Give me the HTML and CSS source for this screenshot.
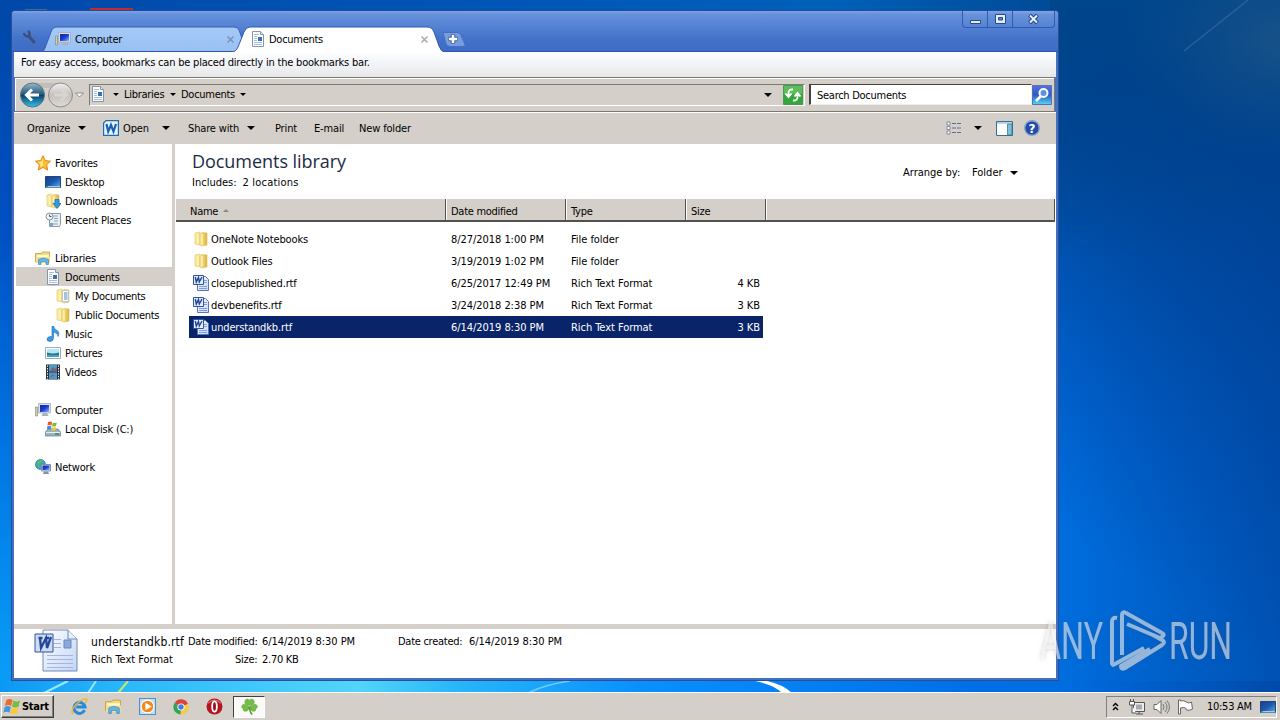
FILE: index.html
```
<!DOCTYPE html>
<html lang="en">
<head>
<meta charset="utf-8">
<title>Documents</title>
<link rel="stylesheet" href="styles.css">
</head>
<body>
<svg class="defs" width="0" height="0">
  <defs>
    <linearGradient id="gold" x1="0" x2="1"><stop offset="0" stop-color="#fdf0a0"/><stop offset="1" stop-color="#dfb03a"/></linearGradient>
    <linearGradient id="screen" x1="0" x2="1" y1="0" y2="1"><stop offset="0" stop-color="#0a2a9c"/><stop offset=".5" stop-color="#1c3cd0"/><stop offset="1" stop-color="#8fb8ff"/></linearGradient>
    <linearGradient id="paper" x1="0" x2="1" y1="0" y2="1"><stop offset="0" stop-color="#fff"/><stop offset="1" stop-color="#c3d4f5"/></linearGradient>
    <linearGradient id="desk" x1="0" x2="1" y1="0" y2="1"><stop offset="0" stop-color="#1a3f86"/><stop offset=".5" stop-color="#1b59b0"/><stop offset="1" stop-color="#58b2e8"/></linearGradient>
  </defs>
  <symbol id="folder" viewBox="0 0 16 16"><path d="M2 2l5-1v13l-5-1z" fill="#f9e998" stroke="#e3c76c" stroke-width=".6"/><path d="M7 3l2-1.500 5 .5v12l-5 1-2-1z" fill="url(#gold)" stroke="#dab85a" stroke-width=".6"/><path d="M9 3.500v10M5 4v8" stroke="#fff8c8"/></symbol>
  <symbol id="doc" viewBox="0 0 16 16"><path d="M2.500.5h8l3 3v12h-11z" fill="#fbfdff" stroke="#8795a8"/><path d="M10.500.5v3h3" fill="#dce6f2" stroke="#8795a8"/><path d="M4 3.500h5M4 5.500h3M4 7.500h3M4 9.500h3M4 11.500h8M4 13.500h8" stroke="#a9bdd6"/><path d="M8 6h4v4H8z" fill="#3f6db2"/></symbol>
  <symbol id="word" viewBox="0 0 16 16"><path d="M4.500 1.500h8l3 3v11h-11z" fill="url(#paper)" stroke="#5577b8"/><path d="M11 5.500h3M11 7.500h3M6 11.500h8M6 13.500h8" stroke="#7f9ed6"/><path d="M.5.500h10v9H.5z" fill="#e6eefc" stroke="#3156a3"/><path d="M2.300 2l1 5L5.500 2.500l.8 4.500L9 2" fill="none" stroke="#1d4297" stroke-width="1.400"/></symbol>
  <symbol id="openword" viewBox="0 0 16 16"><path d="M3 .6h12.400v14.800H.6V3z" fill="#e8f3fd" stroke="#1d6bb2" stroke-width="1.200"/><path d="M3.500 4l1.700 7.500L8 5l2.500 6.500L13 4" fill="none" stroke="#1961b5" stroke-width="2.200"/></symbol>
  <symbol id="pc" viewBox="0 0 16 16"><path d="M.5 5h2v9h-2z" fill="#c9cfa8" stroke="#818970" stroke-width=".6"/><path d="M3.500 1.500h12v9.500h-12z" fill="#dce2e8" stroke="#9aa5b0" stroke-width=".7"/><path d="M5 3h9v7H5z" fill="url(#screen)"/><path d="M8 11h4l1.500 3h-7z" fill="#a9b2bc"/></symbol>
  <symbol id="star" viewBox="0 0 16 16"><path d="M8 .7l2.300 4.900 5.200.6-3.900 3.600 1.100 5.300L8 12.400l-4.700 2.700 1-5.300L.5 6.200l5.200-.6z" fill="#fbc02f" stroke="#e38420"/><path d="M8 3v8L5 12l.6-3L3 7l3.500-.5z" fill="#ffe58c"/></symbol>
  <symbol id="desktop" viewBox="0 0 16 16"><path d="M.5 2.500h15v11H.5z" fill="url(#desk)" stroke="#24447c"/><path d="M1 12h14v1.500H1z" fill="#a9c8e4"/><path d="M1 12h2v1.500H1z" fill="#2a7"/></symbol>
  <symbol id="down" viewBox="0 0 16 16"><use href="#folder"/><path d="M10 6.500h4v4h2l-4 5-4-5h2z" fill="#2f9be0" stroke="#1469ae" stroke-width=".7"/></symbol>
  <symbol id="recent" viewBox="0 0 16 16"><path d="M4.500 1.500h11v11l-1 2h-10z" fill="#e9eff3" stroke="#8998a3"/><path d="M6 4h7M9 6.500h4M9 9h4M6 12h7" stroke="#8ca7b8"/><circle cx="4.500" cy="4.500" r="3.500" fill="#f4f8fa" stroke="#8496a2"/><path d="M4.500 2.500v2h2" stroke="#456" fill="none"/><path d="M4 11h4v3H4z" fill="#7ca3b9"/></symbol>
  <symbol id="lib" viewBox="0 0 16 16"><path d="M.5 3.500h6l1-1.500h7v10H.5z" fill="#f4dc7c" stroke="#c59a38" stroke-width=".8"/><path d="M2 5h12v3H2z" fill="#fff8d8"/><path d="M1 7h14v6H1z" fill="#f5df8c"/><path d="M3.500 14.500V9.500q4.500-3 10 0v5H11V12q-2.500-1-5 0v2.500z" fill="#62b5e5" stroke="#2d82ba" stroke-width=".6"/></symbol>
  <symbol id="mydoc" viewBox="0 0 16 16"><use href="#folder"/><path d="M7.500 2.500h6v11h-6z" fill="#fff" stroke="#a8bacb" stroke-width=".7"/><path d="M9 5h3.500M9 7h3.500M9 9h3.500M9 11h3.500" stroke="#4d83bd"/></symbol>
  <symbol id="music" viewBox="0 0 16 16"><path d="M7 0h1.500q.5 3 3.500 4.500t1 6q.5-3-4.500-4.500V12.500q-.5 3-3.500 3T2 13q.5-3 5-2.500z" fill="#3a9be4" stroke="#1b6fb9" stroke-width=".6"/></symbol>
  <symbol id="pic" viewBox="0 0 16 16"><path d="M.5 2.500h15v11H.5z" fill="#fff" stroke="#9eabb8"/><path d="M2 4h12v8H2z" fill="#b8e5f5"/><path d="M2 7.500q4 1 6 1t6-1V12H2z" fill="#287b8e"/><path d="M2 10h12v2H2z" fill="#3da1cc"/></symbol>
  <symbol id="video" viewBox="0 0 16 16"><path d="M1 .5h14v15H1z" fill="#26313c"/><path d="M4 1h8v6.500H4zM4 8.500h8V15H4z" fill="#4a9bcb"/><path d="M5 7l3-4 2 2 2-2v4.500zM5 14l2-4 2 2 2-2z" fill="#865c75"/><path d="M2.500 1.500v14M13.500 1.500v14" stroke="#fff" stroke-dasharray="1.300 1.300"/></symbol>
  <symbol id="disk" viewBox="0 0 16 16"><path d="M3 8h10l2.500 3v4H.5v-4z" fill="#9cb3bf" stroke="#5e7887" stroke-width=".7"/><path d="M1 11.500h14" stroke="#e4eff4"/><path d="M10 13h4" stroke="#2f7f63" stroke-width="1.300"/><path d="M3 1q2-1 4 0L6.500 4.500q-2-1-4 0z" fill="#e85b28"/><path d="M7.800 1.500q2 1 4 0L11 5q-2 1-4 0z" fill="#7dbb3c"/><path d="M2.300 5.300q2-1 4 0L6 8.500q-2-1-4 0z" fill="#3d91d8"/><path d="M7 6q2 1 4 0l-.5 3q-2 1-4 0z" fill="#f8c431"/></symbol>
  <symbol id="net" viewBox="0 0 16 16"><circle cx="5.500" cy="5.500" r="5" fill="#37a1ca" stroke="#25749e" stroke-width=".7"/><path d="M2 3q3-3 6-2L6 4 4 5l1 3-2 1z" fill="#62bc5a"/><path d="M6.500 5.500h9V12h-9z" fill="#d7e2ee" stroke="#7f8fa6"/><path d="M7.500 6.500h7V11h-7z" fill="url(#screen)"/><path d="M9 12.500h4l1 2.500H8z" fill="#8291a6"/></symbol>
  <symbol id="flag" viewBox="0 0 20 18"><path d="M3.500 2q3.500-2 6.500 0L8.500 8.500q-3-2-6.500 0z" fill="#ee6a2c"/><path d="M11 2.700q3.500 2 7 0L16.500 9q-3.500 2-7 0z" fill="#77bd3f"/><path d="M1.700 9.500q3.500-2 6.500 0L6.800 15.500q-3-2-6.500 0z" fill="#4398dc"/><path d="M9.200 10.200q3.500 2 7 0l-1.400 6q-3.500 2-7 0z" fill="#fbc934"/></symbol>
  <symbol id="ie" viewBox="0 0 16 16"><path d="M12.800 11.500A5.200 5.200 0 1 1 13.200 8.500H5" fill="none" stroke="#2589dc" stroke-width="2.800"/><path d="M2 15Q-1 13 4 7T14.500.8Q16 2 13 5" fill="none" stroke="#eeb62d" stroke-width="1.300"/></symbol>
  <symbol id="wmp" viewBox="0 0 16 16"><path d="M.5.5h15v15H.5z" fill="#bde0f6" stroke="#4e91c7"/><circle cx="8" cy="8" r="6" fill="#f38a1b" stroke="#fff"/><path d="M6 4.500l6 3.500-6 3.500z" fill="#fff"/></symbol>
  <symbol id="chrome" viewBox="0 0 16 16"><path d="M8 8L1.500 4A7.500 7.500 0 0 1 15 5z" fill="#dc4437"/><path d="M8 8L15 5A7.500 7.500 0 0 1 7.500 15.500z" fill="#f6cb3c"/><path d="M8 8l-.5 7.500A7.500 7.500 0 0 1 1.500 4z" fill="#36a352"/><circle cx="8" cy="8" r="3.600" fill="#fff"/><circle cx="8" cy="8" r="2.700" fill="#437fdf"/></symbol>
  <symbol id="opera" viewBox="0 0 16 16"><circle cx="8" cy="8" r="7.500" fill="#b3151e"/><path d="M2 5q6-6 12 0" stroke="#e36b70" fill="none"/><ellipse cx="8" cy="8" rx="2.200" ry="4.800" fill="#9c101a" stroke="#fff" stroke-width="1.700"/></symbol>
  <symbol id="clover" viewBox="0 0 16 16"><g fill="#74bd48" stroke="#5ba337" stroke-width=".5"><path d="M8 7Q2 6 4 2q2-2 4 0 2-2 4 0 2 4-4 5z"/><path d="M7.500 8Q2 4 .8 7.500 0 9 2 10q0 3 3 2.500 3-1 2.500-4.500z"/><path d="M8.500 8Q14 4 15.200 7.500 16 9 14 10q0 3-3 2.500-3-1-2.500-4.500z"/></g><path d="M8 8q0 5 2.500 7.500" fill="none" stroke="#56992f" stroke-width="1.500"/></symbol>
</svg>

<div class="screen">
  <svg class="wallpaper" width="1280" height="720" viewBox="0 0 1280 720">
    <defs>
      <linearGradient id="wl" x1="0" x2="0" y1="0" y2="1"><stop offset="0" stop-color="#0048a8"/><stop offset=".3" stop-color="#004fc0"/><stop offset=".6" stop-color="#0072e2"/><stop offset=".93" stop-color="#089cf6"/></linearGradient>
      <linearGradient id="wt" x1="0" x2="1"><stop offset="0" stop-color="#0049aa"/><stop offset=".4" stop-color="#0056b6"/><stop offset=".65" stop-color="#0060b8"/><stop offset=".82" stop-color="#004b97"/><stop offset="1" stop-color="#004488"/></linearGradient>
      <linearGradient id="wb" x1="0" x2="1"><stop offset="0" stop-color="#0a98f4"/><stop offset=".1" stop-color="#2bb9fb"/><stop offset=".28" stop-color="#52d5fa"/><stop offset=".36" stop-color="#27b5fa"/><stop offset=".5" stop-color="#0990ff"/><stop offset=".75" stop-color="#0070e8"/><stop offset=".83" stop-color="#006ce0"/><stop offset="1" stop-color="#004aa9"/></linearGradient>
      <linearGradient id="wr" gradientUnits="userSpaceOnUse" x1="1060" y1="530" x2="1300" y2="170"><stop offset="0" stop-color="#006fe0"/><stop offset=".3" stop-color="#005fca"/><stop offset=".65" stop-color="#004da6"/><stop offset="1" stop-color="#00408a"/></linearGradient>
      <linearGradient id="wrx" x1="0" x2="1"><stop offset="0" stop-color="#00419a" stop-opacity="0"/><stop offset="1" stop-color="#00439c" stop-opacity=".65"/></linearGradient>
      <linearGradient id="wtop" x1="0" x2="0" y1="0" y2="1"><stop offset="0" stop-color="#00468c"/><stop offset=".45" stop-color="#00438c" stop-opacity=".7"/><stop offset="1" stop-color="#00438c" stop-opacity="0"/></linearGradient>
      <radialGradient id="glow"><stop offset="0" stop-color="#285a85" stop-opacity=".6"/><stop offset="1" stop-color="#104c84" stop-opacity="0"/></radialGradient>
    </defs>
    <path d="M0 0h1280v720H0z" fill="url(#wl)"/>
    <path d="M0 0h1280v11H0z" fill="url(#wt)"/>
    <path d="M1050 0h230v720h-230z" fill="url(#wr)"/>
    <path d="M1050 0h230v720h-230z" fill="url(#wrx)"/>
    <path d="M1050 0h230v260h-230z" fill="url(#wtop)"/>
    <path d="M0 681h1280v12H0z" fill="url(#wb)"/>
    <ellipse cx="1280" cy="40" rx="160" ry="120" fill="url(#glow)"/>
    <path d="M1248 0l-64 51" stroke="#39699c" stroke-width="1.500" opacity=".7"/>
    <path d="M755 681q20 4 27 12h10q-10-9-25-12z" fill="#fff"/>
    <path d="M44 693l24-12M88 693l8-12" stroke="#9be7ff" stroke-width="2"/>
    <path d="M118 693l10-12" stroke="#c5e66c" stroke-width="2"/>
    <path d="M530 692q18-8 40-11" fill="none" stroke="#70caff" stroke-width="1.500"/>
    <path d="M25 9.500h22" stroke="#3c6a9c"/><path d="M90 9h43" stroke="#c82a2c" stroke-width="2"/>
  </svg>

  <section class="window">
    <header class="titlebar">
      <svg class="tabshapes" width="1047" height="41" viewBox="0 0 1047 41">
        <defs><linearGradient id="tabg" x1="0" x2="0" y1="0" y2="1"><stop offset="0" stop-color="#a5caf8"/><stop offset="1" stop-color="#98c0f2"/></linearGradient></defs>
        <path d="M30 41q2-1 3-4l6-16q1.500-5 6-5h177q4 0 5 3l5 14v8z" fill="url(#tabg)" stroke="#3561b4"/>
        <path d="M0 40.500h1047" stroke="#2e57ac"/>
        <path d="M219 42v-1q5 0 7-5l6-15q2-5 6-5h177q5 0 7 5l5 14q2 6 6 6v1z" fill="#fff" stroke="#315aae"/>
        <path d="M219 41h215v2H219z" fill="#fff"/>
        <path d="M431 21.500h14q3 0 4 3l4 9q1 2-3 2h-12q-3 0-4-3z" fill="#769de0" stroke="#446fc0"/>
        <path d="M441 23.500v9M436.500 28h9" stroke="#45639e" stroke-width="4.500"/><path d="M441 24v8M437 28h8" stroke="#fff" stroke-width="2.500"/>
        <path d="M16.500 25l5.500 6" stroke="#3c4f78" stroke-width="3" stroke-linecap="round"/><path d="M12 22a3.500 3.500 0 0 0 5 3 3.500 3.500 0 0 0-1-5" fill="none" stroke="#3c4f78" stroke-width="2.400"/>
      </svg>
      <div class="tab tab-bg"><svg width="16" height="16"><use href="#pc"/></svg><span class="tab-name">Computer</span><svg width="9" height="9" viewBox="0 0 9 9"><path d="M1.500 1.500l6 6M7.500 1.500l-6 6" stroke="#7d93b5" stroke-width="1.500"/></svg></div>
      <div class="tab tab-on"><svg width="16" height="16"><use href="#doc"/></svg><span class="tab-name">Documents</span><svg width="9" height="9" viewBox="0 0 9 9"><path d="M1.500 1.500l6 6M7.500 1.500l-6 6" stroke="#aaa" stroke-width="1.500"/></svg></div>
      <div class="winbtns">
        <span><svg width="13" height="12"><path d="M1.500 7.500h10v3h-10z" fill="#e6eefb" stroke="#274987"/></svg></span>
        <span><svg width="13" height="12"><path d="M1.500 1.500h10v9h-10zM4.500 4.500h4v2.500h-4z" fill="#e6eefb" fill-rule="evenodd" stroke="#274987"/></svg></span>
        <span class="wide"><svg width="13" height="12"><path d="M2.500 2l8 8M10.500 2l-8 8" stroke="#274987" stroke-width="4"/><path d="M3 2.500l7 7M10 2.500l-7 7" stroke="#e6eefb" stroke-width="2"/></svg></span>
      </div>
    </header>
    <div class="bookmarks"><span>For easy access, bookmarks can be placed directly in the bookmarks bar.</span></div>
    <div class="nav">
      <svg class="navbtns" width="70" height="30" viewBox="0 0 70 30">
        <defs><linearGradient id="back" x1="0" x2="0" y1="0" y2="1"><stop offset="0" stop-color="#9bb7c9"/><stop offset=".48" stop-color="#205778"/><stop offset=".52" stop-color="#0b4168"/><stop offset="1" stop-color="#37c2f0"/></linearGradient><linearGradient id="fwd" x1="0" x2="0" y1="0" y2="1"><stop offset="0" stop-color="#eee"/><stop offset=".5" stop-color="#c4c1bd"/><stop offset="1" stop-color="#dedbd7"/></linearGradient></defs>
        <path d="M16 3h28v5H16z" fill="#c2bdb6"/>
        <circle cx="15.500" cy="15" r="12" fill="url(#back)" stroke="#52758c"/><path d="M22 15H10M15 9.500L9.500 15l5.500 5.500" fill="none" stroke="#fff" stroke-width="3"/>
        <circle cx="43.500" cy="15" r="12" fill="url(#fwd)" stroke="#8d8b88"/><path d="M37 15h12M44 9.500l5.500 5.500-5.500 5.500" fill="none" stroke="#d8d5d1" stroke-width="3"/>
        <path d="M58.500 13h8l-4 4z" fill="#fff" stroke="#8c8a86"/>
      </svg>
      <div class="address"><svg class="addr-ic" width="16" height="16"><use href="#doc"/></svg><i class="arr small"></i><span class="crumb1">Libraries</span><i class="arr small"></i><span class="crumb2">Documents</span><i class="arr small"></i><i class="arr last"></i>
        <svg width="20" height="20" viewBox="0 0 20 20"><path d="M.5.5h19v19H.5z" fill="#32a83c" stroke="#4a9a50"/><path d="M1 1h18v8H1z" fill="#75ce70" opacity=".6"/><path d="M10 4.500Q5.500 4 5.500 8v3M2.500 8.500l3 3.500 3-3.500M10 15.500q4.500.5 4.500-3.500V9M11.500 11.500l3-3.500 3 3.500" fill="none" stroke="#fff" stroke-width="1.900"/></svg></div>
      <div class="search">Search Documents</div>
      <svg class="go" width="20" height="20" viewBox="0 0 20 20"><defs><linearGradient id="gog" x1="0" x2="0" y1="0" y2="1"><stop offset="0" stop-color="#5b6fdd"/><stop offset=".5" stop-color="#2e58c8"/><stop offset="1" stop-color="#59d6f6"/></linearGradient></defs><path d="M.5.5h19v19H.5z" fill="url(#gog)" stroke="#5672b3"/><circle cx="11.500" cy="8" r="4" fill="#5b91e0" stroke="#fff" stroke-width="2"/><path d="M8.500 11.500L4 16" stroke="#fff" stroke-width="2.600"/></svg>
    </div>
    <div class="tools">
      <span class="t-org">Organize</span><i class="arr"></i>
      <svg class="t-wi" width="16" height="16"><use href="#openword"/></svg><span class="t-open">Open</span><i class="arr"></i>
      <span class="t-share">Share with</span><i class="arr"></i>
      <span class="t-print">Print</span><span class="t-mail">E-mail</span><span class="t-new">New folder</span>
      <svg class="t-view" width="16" height="14" viewBox="0 0 16 14"><path d="M1 1h3v3H1zM1 5.500h3v3H1zM1 10h3v3H1z" fill="#fff" stroke="#687c95" stroke-width=".8"/><path d="M6 2.500h4M11 2.500h4M6 7h4M11 7h4M6 11.500h4M11 11.500h4" stroke="#5d6f85"/></svg><i class="arr"></i>
      <svg class="t-pane" width="17" height="15" viewBox="0 0 17 15"><path d="M.5.5h16v14H.5z" fill="#fff" stroke="#376b93"/><path d="M1 1h15v2H1z" fill="#b5d5e9"/><path d="M11.500 3v11h4.500V3z" fill="#7fc0d4" stroke="#2e718f" stroke-width=".7"/></svg>
      <svg class="t-help" width="16" height="16"><circle cx="8" cy="8" r="7.300" fill="#234ba8" stroke="#8ba1cc" stroke-width="1.400"/><text class="q" x="8" y="12.500" text-anchor="middle">?</text></svg>
    </div>
    <main class="body">
      <nav class="tree">
        <div class="node l0"><svg width="16" height="16"><use href="#star"/></svg><span>Favorites</span></div>
        <div class="node l1"><svg width="16" height="16"><use href="#desktop"/></svg><span>Desktop</span></div>
        <div class="node l1"><svg width="16" height="16"><use href="#down"/></svg><span>Downloads</span></div>
        <div class="node l1"><svg width="16" height="16"><use href="#recent"/></svg><span>Recent Places</span></div>
        <div class="node l0 gap"><svg width="16" height="16"><use href="#lib"/></svg><span>Libraries</span></div>
        <div class="node l1 on"><svg width="16" height="16"><use href="#doc"/></svg><span>Documents</span></div>
        <div class="node l2"><svg width="16" height="16"><use href="#mydoc"/></svg><span>My Documents</span></div>
        <div class="node l2"><svg width="16" height="16"><use href="#folder"/></svg><span>Public Documents</span></div>
        <div class="node l1"><svg width="16" height="16"><use href="#music"/></svg><span>Music</span></div>
        <div class="node l1"><svg width="16" height="16"><use href="#pic"/></svg><span>Pictures</span></div>
        <div class="node l1"><svg width="16" height="16"><use href="#video"/></svg><span>Videos</span></div>
        <div class="node l0 gap"><svg width="16" height="16"><use href="#pc"/></svg><span>Computer</span></div>
        <div class="node l1"><svg width="16" height="16"><use href="#disk"/></svg><span>Local Disk (C:)</span></div>
        <div class="node l0 gap"><svg width="16" height="16"><use href="#net"/></svg><span>Network</span></div>
      </nav>
      <section class="list">
        <div class="libhead">
          <div><h1>Documents library</h1><p><span>Includes:</span><span class="locs">2 locations</span></p></div>
          <div class="arrange"><span class="arr-by">Arrange by:</span><span class="arr-f">Folder</span><i class="arr"></i></div>
        </div>
        <div class="cols"><span>Name <i class="sort"></i></span><span>Date modified</span><span>Type</span><span>Size</span><span></span></div>
        <div class="row"><span class="fname"><svg width="16" height="16"><use href="#folder"/></svg>OneNote Notebooks</span><span class="date">8/27/2018 1:00 PM</span><span>File folder</span><span class="size"></span></div>
        <div class="row"><span class="fname"><svg width="16" height="16"><use href="#folder"/></svg>Outlook Files</span><span class="date">3/19/2019 1:02 PM</span><span>File folder</span><span class="size"></span></div>
        <div class="row"><span class="fname"><svg width="16" height="16"><use href="#word"/></svg>closepublished.rtf</span><span class="date">6/25/2017 12:49 PM</span><span>Rich Text Format</span><span class="size">4 KB</span></div>
        <div class="row"><span class="fname"><svg width="16" height="16"><use href="#word"/></svg>devbenefits.rtf</span><span class="date">3/24/2018 2:38 PM</span><span>Rich Text Format</span><span class="size">3 KB</span></div>
        <div class="row sel"><span class="fname"><svg width="16" height="16"><use href="#word"/></svg>understandkb.rtf</span><span class="date">6/14/2019 8:30 PM</span><span>Rich Text Format</span><span class="size">3 KB</span></div>
      </section>
    </main>
    <footer class="details">
      <svg class="bigdoc" width="44" height="43" viewBox="0 0 44 43"><path d="M9 1h25l9 9v32H9z" fill="url(#paper)" stroke="#7189b8"/><path d="M34 1v9h9" fill="#e8effb" stroke="#6f87b5"/><path d="M20 10.500h7M20 14.500h7M20 18.500h7M13 26.500h26M13 30.500h26M13 34.500h26M13 38.500h26" stroke="#a3b7dc"/><path d="M30 11h7v8h-7z" fill="#8ba9d9" stroke="#6889c1"/><path d="M1 5h18v18H1z" fill="#cfdcf2" stroke="#3155a0"/><path d="M4.500 9h4M11 9h4M6 9l1 10 5-10 1 10L17 8" fill="none" stroke="#23479a" stroke-width="2.300"/></svg>
      <div class="dgrid">
        <div><span class="dname">understandkb.rtf</span><span class="dlab">Date modified:</span><span class="dval">6/14/2019 8:30 PM</span><span class="dlab created">Date created:</span><span class="dval">6/14/2019 8:30 PM</span></div>
        <div><span class="dtype">Rich Text Format</span><span class="dsize">Size:</span><span>2.70 KB</span></div>
      </div>
    </footer>
  </section>

  <svg class="watermark" width="210" height="76" viewBox="0 0 210 76">
    <g fill="#fff" opacity=".55"><text class="wm" transform="translate(8 52) scale(.59 1)" textLength="107" lengthAdjust="spacingAndGlyphs">ANY</text><text class="wm" transform="translate(137 52) scale(.59 1)" textLength="107" lengthAdjust="spacingAndGlyphs">RUN</text></g>
    <path d="M85 11q-5-1-5 4v41q0 3 3 1l29-16M90 48V8q0-4 4-2l36 20q4 2-2 5L95 17M121 28l9 5q4 2 0 5L93 61q-4 2-4-2l29-17" fill="none" stroke="#fff" stroke-width="4" stroke-linejoin="round" opacity=".55"/>
  </svg>

  <div class="taskbar">
    <button class="start"><svg width="19" height="17"><use href="#flag"/></svg>Start</button>
    <div class="quick"><svg width="17" height="17"><use href="#ie"/></svg><svg width="17" height="17"><use href="#lib"/></svg><svg width="17" height="17"><use href="#wmp"/></svg><svg width="16" height="16"><use href="#chrome"/></svg><svg width="17" height="17"><use href="#opera"/></svg></div>
    <div class="active"><svg width="17" height="17"><use href="#clover"/></svg></div>
    <div class="tray">
      <svg width="7" height="9" viewBox="0 0 7 9"><path d="M1 4l2.500-2.500L6 4M1 8l2.500-2.500L6 8" fill="none" stroke="#000" stroke-width="1.400"/></svg>
      <svg class="tr-net" width="16" height="16" viewBox="0 0 16 16"><path d="M4.500 3.500h11v9h-11zM7 15h7M10 12.500V15" fill="#eee" stroke="#555"/><path d="M7 5.500h6v5H7z" fill="#aaa"/><path d="M.5 2.500h5V6h-5zM1.500 0v2.500M4.500 0v2.500M3 6v8h4" fill="#fff" stroke="#555"/></svg>
      <svg class="tr-vol" width="17" height="16" viewBox="0 0 17 16"><path d="M1 5.500h3l4-4v13l-4-4H1z" fill="#fff" stroke="#666"/><path d="M10 5q2 3 0 6M12 3q4 5 0 10M14 1.500q5 6.500 0 13" fill="none" stroke="#777"/></svg>
      <svg class="tr-flag" width="16" height="16" viewBox="0 0 16 16"><path d="M1.500 1v14h2V9q3-1 5 0l1 2q3 1 6-1l-1-7q-3 2-5 0-3-2-6-1V1z" fill="#fff" stroke="#666"/></svg>
      <span>10:53 AM</span>
      <svg width="16" height="16"><use href="#desktop"/></svg>
    </div>
  </div>
</div>
</body>
</html>
```
FILE: styles.css
```
* { box-sizing: border-box; }
body { margin: 0; background: #005ab8; }
.defs { position: absolute; }
svg { display: block; flex: none; }
.screen {
  position: relative; width: 1280px; height: 720px; overflow: hidden;
  display: flex; flex-direction: column; justify-content: space-between;
  padding-top: 10px;
  font: 11px "DejaVu Sans Condensed", "DejaVu Sans", sans-serif; font-stretch: condensed;
  letter-spacing: -0.27px; color: #000; white-space: nowrap;
}
.wallpaper { position: absolute; left: 0; top: 0; }

.window {
  position: relative; width: 1048px; height: 671px; margin-left: 11px;
  border: 1px solid #2d4f8f; border-top-color: #1e4b9a; border-radius: 4px 4px 0 0;
  background: #4470c4; display: flex; flex-direction: column; padding: 0 2px 2px;
}
.titlebar {
  position: relative; height: 40px; margin: 0 -2px; padding-left: 43px; flex: none; display: flex;
  background: linear-gradient(#7ea4e6 0, #6691dc 3px, #5481d3 16px, #4272c9 28px, #3f6bc4);
  border-radius: 3px 3px 0 0;
}
.tabshapes { position: absolute; left: 0; top: 0; }
.tab { position: relative; display: flex; align-items: center; padding-top: 16px; }
.tab-name { flex: 1; margin-left: 4px; padding-top: 1px; }
.tab-bg { width: 180px; }
.tab-on { width: 179px; margin-left: 15px; }
.tab-on .tab-name { margin-left: 3px; }
.winbtns { position: relative; display: flex; margin-left: auto; margin-right: 3px; height: 17px; border: 1px solid #315aae; border-top: 0; border-radius: 0 0 4px 4px; background: linear-gradient(#7ea4e6, #6791da 4px, #5582d2); }
.winbtns span { width: 25px; display: flex; align-items: center; justify-content: center; border-right: 1px solid #315aae; }
.winbtns .wide { width: 41px; border-right: 0; }
.bookmarks { height: 26px; flex: none; background: linear-gradient(#fff, #f4f6fa 40%, #e7e7e7); padding: 5px 7px; line-height: 14px; letter-spacing: -0.2px; }

.nav { height: 35px; flex: none; background: #d4cfc8; border: 1px solid #7b7873; border-width: 1px 1px 1px 0; box-shadow: inset 1px 1px #fff, 0 1px #fff; display: flex; align-items: center; padding-left: 2px; margin: 0 1px; }
.navbtns { margin-right: 2px; }
.address { width: 716px; height: 22px; border: 1px solid #7d7973; border-right-color: #fff; border-bottom-color: #fff; display: flex; align-items: center; padding: 0 1px; }
.addr-ic { margin: 0 1px 2px -1px; }
.arr { border: 4px solid transparent; border-top-color: #000; border-bottom: 0; flex: none; }
.arr.small { border-width: 3px 3px 0; margin: 0 5px 0 6px; }
.crumb1 { width: 40px; }
.crumb2 { width: 53px; }
.arr.last { margin-left: auto; margin-right: 11px; }
.search { width: 223px; height: 21px; margin-left: 4px; border: 1px solid #454340; border-left-width: 2px; border-right-color: #eee; border-bottom-color: #eee; background: #fff; padding: 2px 0 0 6px; line-height: 17px; }
.go { margin-left: 0; }

.tools { position: relative; height: 32px; flex: none; background: #d4cfc8; border-top: 1px solid #fff; display: flex; align-items: center; padding-left: 13px; padding-bottom: 1px; letter-spacing: -0.15px; }
.t-org { width: 51px; }
.t-wi { margin: 0 4px 0 17px; }
.t-open { width: 39px; }
.t-share { width: 59px; margin-left: 18px; }
.t-print { margin-left: 20px; width: 39px; }
.t-mail { width: 45px; }
.t-new { flex: 1; }
.t-view { margin-right: 12px; }
.t-pane { margin-left: 14px; margin-right: 11px; }
.t-help { margin-right: 16px; }
.q { font: bold 12px "DejaVu Sans", sans-serif; fill: #fff; }

.body { flex: 1; display: flex; background: #fff; }
.tree { width: 160px; margin-left: 1px; padding-top: 9px; border-right: 3px solid #d4cfc8; letter-spacing: -0.2px; }
.node { height: 19px; display: flex; align-items: center; gap: 4px; }
.node span { padding-top: 2px; }
.l0 { padding-left: 20px; }
.l1 { padding-left: 30px; }
.l2 { padding-left: 40px; letter-spacing: -0.29px; }
.gap { margin-top: 19px; }
.on { background: #d4cfc8; margin-left: 1px; padding-left: 29px; }
.list { flex: 1; padding-left: 1px; }
.libhead { height: 55px; padding: 5px 38px 0 16px; display: flex; justify-content: space-between; letter-spacing: 0; }
h1 { margin: 0; font: 18px/24px "Open Sans", "Noto Sans", sans-serif; letter-spacing: -0.05px; color: #1b2b45; }
p { margin: 3px 0 0; line-height: 14px; }
.locs { margin-left: 6px; letter-spacing: .2px; }
.arrange { height: 47px; display: flex; align-items: center; }
.arr-by { width: 69px; }
.arr-f { width: 38px; }
.cols { height: 23px; border-bottom: 2px solid #55524e; border-right: 1px solid #55524e; background: #d4cfc8; display: grid; grid-template-columns: 270px 120px 120px 80px 1fr; line-height: 25px; margin-right: 1px; margin-bottom: 6px; }
.cols span { height: 21px; padding-left: 4px; border-left: 1px solid #fff; border-right: 1px solid #55524e; }
.cols span:first-child { padding-left: 14px; border-left: 0; }
.cols span:last-child { border-right: 0; }
.sort { display: inline-block; border: 3px solid transparent; border-bottom-color: #8b8883; border-top: 0; margin: 0 0 3px 2px; }
.row { height: 22px; width: 574px; margin-left: 13px; display: grid; grid-template-columns: 262px 120px 120px 69px; align-items: center; letter-spacing: -0.05px; }
.fname { display: flex; align-items: center; gap: 2px; padding-left: 4px; letter-spacing: -0.14px; }
.size { text-align: right; }
.sel { background: #0a246a; color: #fff; }

.details { height: 54px; flex: none; background: #fff; border-top: 5px solid #d4cfc8; display: flex; padding-left: 20px; }
.bigdoc { margin-right: 13px; }
.dgrid { padding-top: 4px; line-height: 18px; }
.dgrid div { height: 18px; display: flex; }
.dname { width: 97px; font-size: 12px; letter-spacing: .13px; }
.dlab { width: 74px; }
.dval { width: 136px; letter-spacing: -0.04px; }
.created { width: 71px; }
.dtype { width: 144px; letter-spacing: -0.02px; }
.dsize { width: 27px; }

.watermark { position: absolute; left: 1032px; top: 607px; filter: drop-shadow(0 0 2px rgba(80, 80, 80, .5)); }
.wm { font: 52px Roboto, sans-serif; letter-spacing: 0; }

.taskbar { position: relative; height: 28px; background: #d4cfc8; border-top: 1px solid #fff; display: flex; align-items: center; }
.start { width: 53px; height: 23px; margin-left: 1px; padding: 0 1px; border: 1px solid; border-color: #fff #404040 #404040 #fff; box-shadow: inset -1px -1px #808080; background: #d4cfc8; display: flex; align-items: center; font: bold 11px "DejaVu Sans Condensed", "DejaVu Sans", sans-serif; letter-spacing: -0.3px; color: #000; }
.quick { display: flex; align-items: center; gap: 17px; margin-left: 17px; }
.active { width: 32px; height: 22px; margin-left: 10px; border: 1px solid; border-color: #404040 #fff #fff #404040; background: #fbfaf8; display: flex; align-items: center; justify-content: center; }
.tray { width: 171px; height: 22px; margin-left: auto; margin-right: 3px; border: 1px solid; border-color: #808080 #fff #fff #808080; display: flex; align-items: center; padding-left: 5px; }
.tr-net { margin-left: 10px; }
.tr-vol { margin-left: 8px; }
.tr-flag { margin-left: 7px; }
.tray span { margin: 0 8px 0 14px; width: 46px; }
```
